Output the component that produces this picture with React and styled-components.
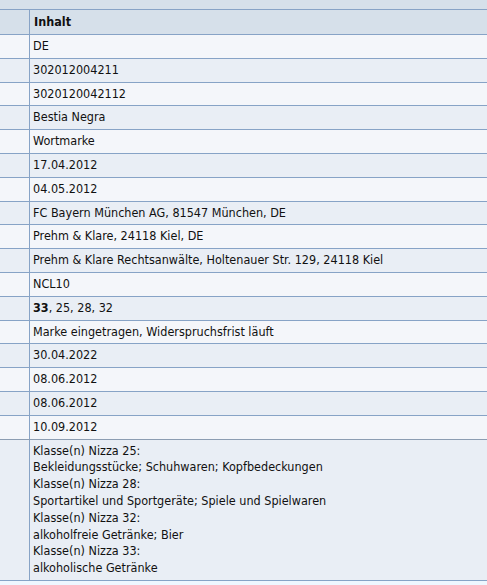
import React from "react";
import styled, { createGlobalStyle } from "styled-components";

const Global = createGlobalStyle`
  html, body { margin: 0; padding: 0; }
  body {
    background: #eef7ff;
    font-family: "DejaVu Sans Condensed", "DejaVu Sans", Verdana, sans-serif;
    font-size: 12.5px;
    color: #111;
  }
`;

const Table = styled.div`
  width: 487px;
  display: flex;
  flex-direction: column;
`;

const TopBand = styled.div`
  height: 9px;
  background: #d6e0ea;
  border-bottom: 1px solid #87a3c6;
`;

const Row = styled.div`
  display: grid;
  grid-template-columns: 29px 1fr;
  background: ${(p) => (p.$head ? "#d6e0ea" : p.$alt ? "#e9eef5" : "#f4f6fa")};
  border-bottom: 1px solid ${(p) => (p.$grey ? "#8c9db2" : "#87a3c6")};
`;

const KeyCell = styled.div``;

const ValueCell = styled.div`
  border-left: 1px solid #87a3c6;
  padding: ${(p) => (p.$head ? "3.6px 3px 3.6px 4px" : "3px 3px 3px 3px")};
  line-height: 16.8px;
  font-weight: ${(p) => (p.$head ? "bold" : "normal")};
  white-space: nowrap;
`;

const Bold = styled.b`
  font-weight: bold;
`;

const rows = [
  "DE",
  "302012004211",
  "3020120042112",
  "Bestia Negra",
  "Wortmarke",
  "17.04.2012",
  "04.05.2012",
  "FC Bayern München AG, 81547 München, DE",
  "Prehm & Klare, 24118 Kiel, DE",
  "Prehm & Klare Rechtsanwälte, Holtenauer Str. 129, 24118 Kiel",
  "NCL10",
  "__classes__",
  "Marke eingetragen, Widerspruchsfrist läuft",
  "30.04.2022",
  "08.06.2012",
  "08.06.2012",
  "10.09.2012",
];

const goods = [
  "Klasse(n) Nizza 25:",
  "Bekleidungsstücke; Schuhwaren; Kopfbedeckungen",
  "Klasse(n) Nizza 28:",
  "Sportartikel und Sportgeräte; Spiele und Spielwaren",
  "Klasse(n) Nizza 32:",
  "alkoholfreie Getränke; Bier",
  "Klasse(n) Nizza 33:",
  "alkoholische Getränke",
];

export default function App() {
  return (
    <>
      <Global />
      <Table>
        <TopBand />
        <Row $head>
          <KeyCell />
          <ValueCell $head>Inhalt</ValueCell>
        </Row>
        {rows.map((r, i) => (
          <Row key={i} $alt={i % 2 === 1} $grey={i === rows.length - 1}>
            <KeyCell />
            <ValueCell>
              {r === "__classes__" ? (
                <>
                  <Bold>33</Bold>, 25, 28, 32
                </>
              ) : (
                r
              )}
            </ValueCell>
          </Row>
        ))}
        <Row $alt>
          <KeyCell />
          <ValueCell>
            {goods.map((g, i) => (
              <div key={i}>{g}</div>
            ))}
          </ValueCell>
        </Row>
      </Table>
    </>
  );
}
